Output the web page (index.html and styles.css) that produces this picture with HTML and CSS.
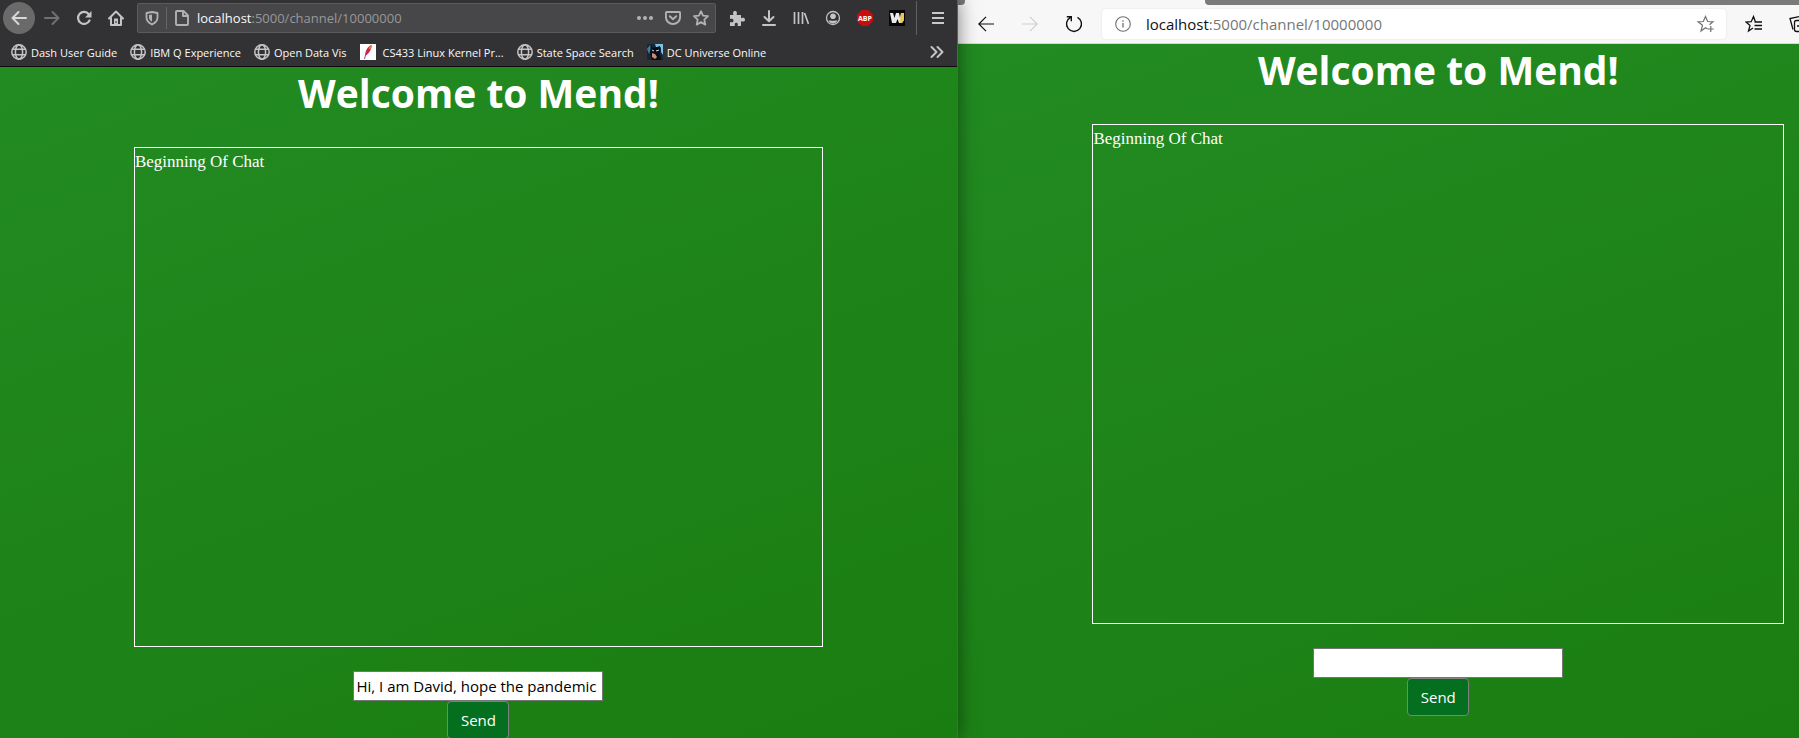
FILE: index.html
```html
<!DOCTYPE html>
<html lang="en">
<head>
<meta charset="utf-8">
<title>Mend</title>
<link rel="stylesheet" href="styles.css">
</head>
<body>
<svg class="defs" aria-hidden="true">
  <symbol id="globe" viewBox="0 0 16 16"><g fill="none" stroke="#c4c4c5" stroke-width="1.5"><circle cx="8" cy="8" r="7.2"/><ellipse cx="8" cy="8" rx="3.6" ry="7.2"/><path d="M1.5 5.3h13M1.5 10.7h13"/></g></symbol>
</svg>
<div class="desktop">
  <section class="window window-dark">
    <header class="dark-chrome">
      <nav class="dark-nav">
        <button class="tool round" aria-label="Back"><svg width="16" height="16" viewBox="0 0 16 16"><path d="M15 8H1.5M7.5 2l-6 6 6 6" fill="none" stroke="#d8d8d8" stroke-width="2" stroke-linecap="round" stroke-linejoin="round"/></svg></button>
        <button class="tool" aria-label="Forward"><svg width="16" height="16" viewBox="0 0 16 16"><path d="M1 8h13.500M8.500 2l6 6-6 6" fill="none" stroke="#717173" stroke-width="2" stroke-linecap="round" stroke-linejoin="round"/></svg></button>
        <button class="tool" aria-label="Reload"><svg width="16" height="16" viewBox="0 0 16 16"><path d="M12.800 4.200A6 6 0 1 0 13.500 10.500" fill="none" stroke="#c4c4c5" stroke-width="2.200" stroke-linecap="round"/><path d="M15.500 1v6.500H9z" fill="#c4c4c5"/></svg></button>
        <button class="tool" aria-label="Home"><svg width="16" height="16" viewBox="0 0 16 16"><path d="M1 8.500L8 1.500l7 7M3 7.500V15h10V7.500" fill="none" stroke="#c4c4c5" stroke-width="2" stroke-linecap="round" stroke-linejoin="round"/><path d="M6 8.500h4V15H6z" fill="#c4c4c5"/><path d="M7.500 11h1v2h-1z" fill="#323234"/></svg></button>
        <div class="dark-url">
          <svg width="14" height="16" viewBox="0 0 14 16"><path d="M7 2l5.500 1v4.500c0 3.500-2.500 5.500-5.500 7-3-1.500-5.500-3.500-5.500-7V3z" fill="none" stroke="#b1b1b3" stroke-width="1.800" stroke-linejoin="round"/><path d="M7 4.500L4 5v2.500c0 2 1.500 3.500 3 4.300z" fill="#b1b1b3"/></svg>
          <span class="url-line"></span>
          <svg width="16" height="16" viewBox="0 0 16 16"><path d="M3 1h6.500L14 5.500V14a1 1 0 0 1-1 1H3a1 1 0 0 1-1-1V2a1 1 0 0 1 1-1zM9 1v5h5" fill="none" stroke="#b1b1b3" stroke-width="1.900" stroke-linejoin="round"/></svg>
          <span class="address">localhost<span class="path">:5000/channel/10000000</span></span>
          <svg width="16" height="16" viewBox="0 0 16 16" fill="#b1b1b3"><circle cx="2" cy="8" r="2"/><circle cx="8" cy="8" r="2"/><circle cx="14" cy="8" r="2"/></svg>
          <svg width="16" height="16" viewBox="0 0 16 16"><path d="M1.900 2h12.200a1 1 0 0 1 1 1v4a7.100 7 0 0 1-14.200 0V3a1 1 0 0 1 1-1zM4.800 6.200L8 9.200l3.200-3" fill="none" stroke="#b1b1b3" stroke-width="1.900" stroke-linecap="round" stroke-linejoin="round"/></svg>
          <svg width="16" height="16" viewBox="0 0 16 16"><path d="M8 1.200l2 4.500 5 .5-3.700 3.400 1 5L8 12.100l-4.300 2.500 1-5L1 6.200l5-.5z" fill="none" stroke="#b1b1b3" stroke-width="1.800" stroke-linejoin="round"/></svg>
        </div>
        <button class="tool" aria-label="Extensions"><svg width="16" height="16" viewBox="0 0 16 16"><path d="M1 5h3.500C3.800 3.500 3.800 1 6 1s2.200 2.500 1.500 4H12v3.200c1.500-.7 4-.7 4 1.500s-2.500 2.200-4 1.500V16H8.500c.7-1.800.3-3.300-1.200-3.300S5.300 14.200 6 16H1v-4c1.800.7 3.500.3 3.500-1.500S2.800 8.200 1 9z" fill="#c4c4c5"/></svg></button>
        <button class="tool" aria-label="Downloads"><svg width="16" height="16" viewBox="0 0 16 16"><path d="M8 1v10M3.500 7L8 11.300 12.500 7M2 15h12" fill="none" stroke="#c4c4c5" stroke-width="2" stroke-linecap="round" stroke-linejoin="round"/></svg></button>
        <button class="tool" aria-label="Library"><svg width="16" height="16" viewBox="0 0 16 16"><path d="M1.500 2v12M5.500 2v12M9.500 2v12M11.500 3l4 11" fill="none" stroke="#c4c4c5" stroke-width="1.700"/></svg></button>
        <button class="tool" aria-label="Account"><svg width="16" height="16" viewBox="0 0 16 16"><circle cx="8" cy="8" r="6.500" fill="none" stroke="#c4c4c5" stroke-width="1.300"/><circle cx="8" cy="6.300" r="2.800" fill="#c4c4c5"/><path d="M3.500 10.500c2 .2 7 .2 9 0-.8 2-2.500 3-4.500 3s-3.700-1-4.500-3z" fill="#c4c4c5"/></svg></button>
        <button class="tool" aria-label="Adblock Plus"><span class="abp">ABP</span></button>
        <button class="tool" aria-label="Web extension"><svg width="16" height="16" viewBox="0 0 16 16"><path d="M0 0h16v16H0z" fill="#050505"/><path d="M1 3h3l1.500 5L7 3h3l1 5 1-5h3v7l-2 3h-3L8.500 9 7 13H3z" fill="#e8e8ea"/><path d="M12 3h3v7l-2 3h-2z" fill="#f0c840"/></svg></button>
        <span class="nav-line"></span>
        <button class="tool menu" aria-label="Menu"><svg width="16" height="16" viewBox="0 0 16 16"><path d="M2 3h12M2 8h12M2 13h12" stroke="#c9c9ca" stroke-width="2"/></svg></button>
      </nav>
      <nav class="bookmarks">
        <a href="#"><svg width="16" height="16"><use href="#globe"/></svg>Dash User Guide</a>
        <a href="#"><svg width="16" height="16"><use href="#globe"/></svg>IBM Q Experience</a>
        <a href="#"><svg width="16" height="16"><use href="#globe"/></svg>Open Data Vis</a>
        <a href="#" class="site"><svg width="16" height="16" viewBox="0 0 16 16"><path d="M0 0h16v16H0z" fill="#fff"/><path d="M4.500 15l1-4" stroke="#8a4b8d" stroke-width="1"/><path d="M5 12C5 7 8 2 11.500 1c.5 3-1.500 8-6.500 11z" fill="#c6284f"/><path d="M8.500 4C9.500 2.500 10.500 1.500 11.500 1c.2 2-.3 3.500-1.300 5z" fill="#f07a2b"/></svg>CS433 Linux Kernel Pr...</a>
        <a href="#"><svg width="16" height="16"><use href="#globe"/></svg>State Space Search</a>
        <a href="#"><svg width="16" height="16" viewBox="0 0 16 16"><path d="M0 0h16v16H0z" fill="#12283a"/><path d="M8 0h8v11l-2-3V3l-2 1-3-1z" fill="#7fbfe4"/><path d="M0 5l3-4 1 4-2 5z" fill="#3a7ea6"/><path d="M4 2l2 2 4-1 3-1v8l1 6H5L3 9z" fill="#0b0d14"/><path d="M5 9l3 1 2 3-2 2-3-2z" fill="#c98b79"/><path d="M5 6l2 1M9 7l3-1" stroke="#b7dff2"/></svg>DC Universe Online</a>
        <button class="tool more" aria-label="More bookmarks"><svg width="16" height="16" viewBox="0 0 16 16"><path d="M2.500 3l5 5-5 5M8.500 3l5 5-5 5" fill="none" stroke="#c4c4c5" stroke-width="2" stroke-linecap="round" stroke-linejoin="round"/></svg></button>
      </nav>
    </header>
    <main class="page">
      <h1>Welcome to Mend!</h1>
      <div class="chat">Beginning Of Chat</div>
      <form class="compose">
        <input type="text" aria-label="Message" value="Hi, I am David, hope the pandemic">
        <button type="button" class="send">Send</button>
      </form>
    </main>
  </section>
  <section class="window window-light">
    <div class="tab-strip"><span class="tab-left"></span><span class="tab-right"></span></div>
    <header class="light-nav">
      <button class="light-tool" aria-label="Back"><svg width="16" height="16" viewBox="0 0 16 16"><path d="M16 8H1M8 .8L.8 8 8 15.200" fill="none" stroke="#111" stroke-width="1.200"/></svg></button>
      <button class="light-tool" aria-label="Forward"><svg width="16" height="16" viewBox="0 0 16 16"><path d="M0 8h15M8 .8L15.200 8 8 15.200" fill="none" stroke="#d0d0d0" stroke-width="1.200"/></svg></button>
      <button class="light-tool" aria-label="Reload"><svg width="18" height="18" viewBox="0 0 18 18"><path d="M5.500 2.300A7.500 7.500 0 1 0 12.500 2.300M1.800 1.700h4.500v4.500" fill="none" stroke="#111" stroke-width="1.400"/></svg></button>
      <div class="light-url">
        <svg width="16" height="16" viewBox="0 0 16 16"><circle cx="8" cy="8" r="7.300" fill="none" stroke="#707070" stroke-width="1.100"/><path d="M8 7v4.500M8 4.300v1.400" stroke="#606060" stroke-width="1.200"/></svg>
        <span class="address">localhost<span class="path">:5000/channel/10000000</span></span>
        <svg width="18" height="18" viewBox="0 0 18 18"><path d="M10.500 14L8.500 12.800 4 16l1.500-5.700L1 6.800l5.300-.3L8.500 1.500l2.200 5 5.300.3-3.500 3M13.800 11v6M10.800 14h6" fill="none" stroke="#707070" stroke-width="1.200"/></svg>
      </div>
      <button class="light-tool" aria-label="Favorites"><svg width="18" height="18" viewBox="0 0 18 18"><path d="M8 13l-4.500 3L5 10.500 1 7l5.200-.3L8.500 1.500l1.800 5M9.500 7H17M9.500 10.500H17M9.500 14H17" fill="none" stroke="#111" stroke-width="1.300"/></svg></button>
      <button class="light-tool" aria-label="Collections"><svg width="18" height="18" viewBox="0 0 18 18"><rect x="5.500" y="5.500" width="11" height="11" rx="2" fill="none" stroke="#111" stroke-width="1.300"/><path d="M4 14.500L1 3.500 12 1.200l1 2.800M8 11h6M11 8v6" fill="none" stroke="#111" stroke-width="1.300"/></svg></button>
    </header>
    <main class="page">
      <h1>Welcome to Mend!</h1>
      <div class="chat">Beginning Of Chat</div>
      <form class="compose">
        <input type="text" aria-label="Message">
        <button type="button" class="send">Send</button>
      </form>
    </main>
  </section>
</div>
</body>
</html>
```
FILE: styles.css
```css
* { box-sizing: border-box; }
body { margin: 0; font-family: "Open Sans", "Noto Sans", sans-serif; }
button { border: 0; padding: 0; background: none; font: inherit; }
.defs { display: none; }

.desktop { display: flex; height: 100vh; overflow: hidden; }
.window { display: flex; flex-direction: column; flex: none; position: relative; }
.window-dark { width: 53.25%; border-right: 1px solid #5c5c5c; z-index: 1; box-shadow: 0 0 18px rgba(0, 0, 0, .5); }
.window-light { width: 53.4%; background: #f7f7f7; }

/* dark browser */
.dark-chrome { background: #323234; border-bottom: 1px solid #0c0c0d; }
.dark-nav { display: flex; align-items: center; height: 36px; padding: 0 3px; }
.tool { display: flex; align-items: center; justify-content: center; flex: none; width: 32px; height: 32px; }
.round { border-radius: 50%; background: #6a6a6b; margin-right: 1px; }
.dark-url { display: flex; align-items: center; flex: 1; min-width: 0; height: 30px; margin: 0 5px; padding: 0 6px 0 7px; gap: 12px; background: #474749; border: 1px solid #5b5b5e; border-radius: 2px; }
.dark-url svg { flex: none; }
.dark-url .address { flex: 1; margin-left: -5px; font-size: 13px; color: #f9f9fa; white-space: nowrap; }
.dark-url .path { color: #98989a; }
.url-line { width: 1px; height: 22px; margin: 0 -5px; background: #66666a; }
.nav-line { width: 1px; height: 34px; margin: 0 5px 0 3px; background: #606062; }
.bookmarks { display: flex; align-items: center; gap: 13px; height: 30px; padding: 2px 4px 0 11px; }
.bookmarks a { display: flex; align-items: center; gap: 4px; flex: none; color: #f9f9fa; font-size: 11px; text-decoration: none; white-space: nowrap; }
.bookmarks .site { gap: 7px; }
.more { margin-left: auto; }
.abp { display: grid; place-items: center; width: 16px; height: 16px; background: #c70d0d; clip-path: polygon(30% 0, 70% 0, 100% 30%, 100% 70%, 70% 100%, 30% 100%, 0 70%, 0 30%); color: #fff; font: bold 7px "Open Sans", sans-serif; }

/* light browser */
.tab-strip { display: flex; justify-content: space-between; height: 5px; }
.tab-left { width: 7px; background: #7c7a78; border-bottom-right-radius: 4px; }
.tab-right { width: 74.3%; background: #7c7a78; border-bottom-left-radius: 4px; }
.light-nav { display: flex; align-items: center; height: 39px; padding: 0 99px 0 6px; border-bottom: 1px solid #d8d8d8; }
.light-tool { display: flex; align-items: center; justify-content: center; flex: none; width: 44px; height: 36px; }
.light-url { display: flex; align-items: center; flex: 1; min-width: 0; height: 30px; margin: 0 6px; padding: 0 11px 0 13px; gap: 15px; background: #fff; border-radius: 4px; box-shadow: 0 0 2px #ddd; }
.light-url svg { flex: none; }
.light-url .address { flex: 1; font-size: 15px; color: #111; white-space: nowrap; }
.light-url .path { color: #767676; }

/* chat page */
.page { flex: 1; display: flex; flex-direction: column; align-items: center; background: linear-gradient(160deg, #228b22, #1a7d11); color: #fff; }
h1 { margin: 0 0 28px; font-size: 39px; line-height: 52px; font-weight: 700; }
.chat { flex: none; width: 72%; height: 500px; border: 1px solid #fff; font-family: "Liberation Serif", serif; font-size: 17px; line-height: 27px; }
.compose { display: flex; flex-direction: column; align-items: center; margin: 24px 0 0; }
.compose input { width: 250px; height: 30px; padding: 1px 2px; border: 1px solid #767676; border-radius: 0; background: #fff; color: #000; font: 15px/24px "Open Sans", sans-serif; }
.send { width: 62px; height: 38px; border: 1px solid #808080; border-radius: 4px; background: #04701f; color: #fff; font-size: 15px; }
```
